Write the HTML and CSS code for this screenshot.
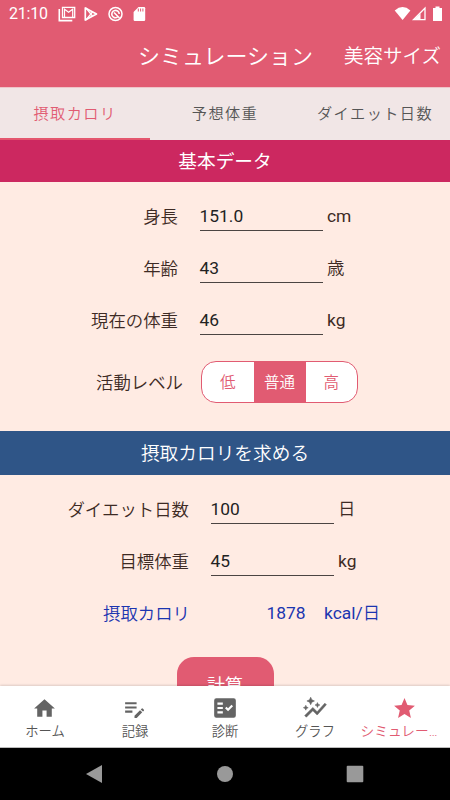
FILE: index.html
```html
<!DOCTYPE html>
<html lang="ja">
<head>
<meta charset="utf-8">
<title>シミュレーション</title>
<link rel="stylesheet" href="styles.css">
</head>
<body>
<div class="screen">
  <div class="status">
    <span class="clock">21:10</span>
    <svg class="notices" width="90" height="18" viewBox="0 0 90 18">
      <g fill="none" stroke="#fff" stroke-width="1.6">
        <path d="M1.300 4v11.600h13"/>
        <path d="M4.500 2.300h12.200v10.200H4.500z" stroke-width="1.300"/>
        <path d="M6.500 12V4.200l4.100 3 4.100-3V12" stroke-width="1.200"/>
        <path d="M27.300 2.900v12.200l11.200-6.100z" stroke-width="1.700" stroke-linejoin="round"/>
        <path d="M28 3l6.500 8M28 15l6.500-8" stroke-width="1.300"/>
        <circle cx="57.500" cy="9" r="6.500" stroke-width="1.500"/>
        <path d="M59.500 12.200A3.700 3.700 0 1 1 61.200 9M56 7.500l5.500 5.500"/>
      </g>
      <path fill="#fff" d="M80.500 2H86q1.200 0 1.200 1.200v11.600Q87.200 16 86 16h-9.200q-1.200 0-1.200-1.200V7z"/>
      <path stroke="#e15b72" stroke-width="1" d="M80.300 3.500v3M82.600 3.500v3M84.900 3.500v3"/>
    </svg>
    <svg class="signals" width="50" height="18" viewBox="0 0 50 18">
      <path fill="#fff" d="M.7 5.500Q8.600-1.400 16.400 5.500L8.600 15z"/>
      <path fill="none" stroke="#fff" stroke-width="1.300" d="M19.500 14.700H31V3z"/>
      <path fill="#fff" d="M26.500 8.500V15H19.500zM41.500 1.500h4v1.600H48v12.400q0 .5-.5.500h-8q-.5 0-.5-.5V3.100h2.500z"/>
    </svg>
  </div>
  <header class="appbar">
    <h1>シミュレーション</h1>
    <span class="action">美容サイズ</span>
  </header>
  <nav class="tabs">
    <span class="tab active">摂取カロリ</span>
    <span class="tab">予想体重</span>
    <span class="tab">ダイエット日数</span>
  </nav>
  <main class="content">
    <h2 class="section basic">基本データ</h2>
    <div class="form">
      <div class="row"><span class="label">身長</span><span class="field">151.0</span><span class="unit latin">cm</span></div>
      <div class="row"><span class="label">年齢</span><span class="field">43</span><span class="unit">歳</span></div>
      <div class="row"><span class="label">現在の体重</span><span class="field">46</span><span class="unit latin">kg</span></div>
      <div class="row level"><span class="label">活動レベル</span>
        <div class="segments"><span>低</span><span class="on">普通</span><span>高</span></div>
      </div>
    </div>
    <h2 class="section goal">摂取カロリを求める</h2>
    <div class="form target">
      <div class="row"><span class="label">ダイエット日数</span><span class="field">100</span><span class="unit">日</span></div>
      <div class="row"><span class="label">目標体重</span><span class="field">45</span><span class="unit latin">kg</span></div>
      <div class="row result"><span class="label">摂取カロリ</span><span class="value">1878</span><span class="unit"><span class="latin">kcal/</span>日</span></div>
    </div>
    <div class="calc">計算</div>
  </main>
  <nav class="bottom">
    <div class="item"><svg viewBox="0 0 24 24"><path d="M10 20v-6h4v6h5v-8h3L12 3 2 12h3v8z"/></svg><span>ホーム</span></div>
    <div class="item"><svg viewBox="0 0 24 24"><path d="M3 10h11v2H3zm0-4h11v2H3zm0 8h7v2H3zm15.010-1.130.71-.71a1 1 0 0 1 1.410 0l.71.710a1 1 0 0 1 0 1.410l-.71.710zm-.71.710-5.300 5.300V21h2.120l5.300-5.300z"/></svg><span>記録</span></div>
    <div class="item"><svg class="wide" viewBox="0 0 24 24"><path fill-rule="evenodd" d="M20 3H4a2 2 0 0 0-2 2v14a2 2 0 0 0 2 2h16a2 2 0 0 0 2-2V5a2 2 0 0 0-2-2zM10 17H5v-2h5zm0-4H5v-2h5zm0-4H5V7h5zm4.820 6L12 12.160l1.410-1.410 1.410 1.420L17.990 9l1.420 1.420z"/></svg><span>診断</span></div>
    <div class="item"><svg class="wide" viewBox="0 0 24 24"><path d="m14.060 9.940-1.560-.69 1.560-.69.690-1.560.690 1.560 1.560.690-1.560.690-.690 1.560zM4 14l.69-1.560 1.560-.690-1.560-.690L4 9.500l-.69 1.560-1.560.690 1.560.690zm4.500-5 1.090-2.410L12 5.500 9.590 4.410 8.500 2 7.410 4.410 5 5.500l2.410 1.090zm-4 11.500 6-6.010 4 4L23 8.930l-1.410-1.410-7.090 7.970-4-4L3 19z" transform="translate(-.5 0)" stroke="#646464" stroke-width=".5"/></svg><span>グラフ</span></div>
    <div class="item current"><svg viewBox="0 0 24 24"><path d="M12 17.270 18.180 21l-1.640-7.030L22 9.240l-7.190-.61L12 2 9.190 8.630 2 9.240l5.460 4.730L5.820 21z"/></svg><span>シミュレー…</span></div>
  </nav>
  <div class="system">
    <svg viewBox="0 0 18 20"><path d="M17 1v18L1 10z"/></svg>
    <svg viewBox="0 0 18 20"><circle cx="9" cy="10" r="8"/></svg>
    <svg viewBox="0 0 18 20"><rect x=".7" y="1.700" width="16.600" height="16.600" rx="1"/></svg>
  </div>
</div>
</body>
</html>
```
FILE: styles.css
```css
* { box-sizing: border-box; }
body {
  margin: 0;
  font-family: Roboto, "Noto Sans CJK JP", sans-serif;
  font-weight: 400;
}
h1, h2 { margin: 0; font-weight: 400; }
.screen {
  width: 450px;
  height: 800px;
  display: flex;
  flex-direction: column;
  overflow: hidden;
  background: #ffebe3;
}
.status {
  height: 27px;
  flex: none;
  display: flex;
  align-items: center;
  padding: 0 6.500px 0 9px;
  background: #e15b72;
  color: #fff;
}
.clock { width: 49px; font-size: 16px; line-height: 27px; letter-spacing: -.2px; }
.signals { margin-left: auto; }
.appbar {
  height: 60px;
  flex: none;
  display: flex;
  align-items: center;
  justify-content: flex-end;
  gap: 31px;
  padding: 0 9px 5px 0;
  background: #e15b72;
  color: #fff;
}
.appbar h1 { font-size: 22px; font-weight: 350; padding-bottom: 2px; }
.action { font-size: 19.5px; font-weight: 350; }
.tabs {
  height: 53px;
  flex: none;
  display: grid;
  grid-template-columns: repeat(3, 1fr);
  background: #f1e6e6;
  border-top: 1px solid #efc5c9;
}
.tab {
  display: flex;
  align-items: center;
  justify-content: center;
  padding-bottom: 3px;
  border-bottom: 2px solid transparent;
  font-size: 15.200px;
  letter-spacing: 1.400px;
  font-weight: 350;
  color: #555;
  white-space: nowrap;
}
.tab.active { color: #e15b72; border-color: #e4566e; }
.content { flex: 1; min-height: 0; overflow: hidden; }
.section {
  display: flex;
  align-items: center;
  justify-content: center;
  padding-bottom: 3px;
  font-size: 18.700px;
  color: #fff;
}
.basic { height: 42px; background: #cc2860; padding-bottom: 4px; }
.goal { height: 44px; background: #2f5587; font-weight: 350; }
.form { height: 249px; padding-top: 8px; }
.row {
  height: 52px;
  display: grid;
  grid-template-columns: 178px 123px 1fr;
  font-size: 17.400px;
  line-height: 53px;
  color: #3d2a24;
  font-weight: 350;
}
.label { text-align: right; white-space: nowrap; line-height: 54px; }
.field {
  height: 41px;
  margin-left: 21.500px;
  margin-right: -21.500px;
  border-bottom: 1px solid #4b4442;
  color: #222;
  font-weight: 400;
}
.unit { padding-left: 26px; }
.latin { font-weight: 400; }
.level { height: 72px; grid-template-columns: 183px auto; }
.level .label { line-height: 74px; }
.segments {
  width: 157px;
  height: 42px;
  margin: 15px 0 0 18px;
  display: grid;
  grid-template-columns: 51.500px 52px 1fr;
  border: 1px solid #e15b72;
  border-radius: 15px;
  overflow: hidden;
  background: #fff;
  font-size: 15.500px;
  line-height: 42px;
  text-align: center;
  color: #e15b72;
}
.segments .on { background: #e15b72; color: #fff; }
.target { height: 182px; padding-top: 8px; }
.target .row { grid-template-columns: 189px 123px 1fr; }
.result, .result .unit { color: #1b35b0; }
.target .result { grid-template-columns: 190px 122px 1fr; }
.result .value { padding-left: 76.500px; font-weight: 400; }
.result .unit { padding-left: 12px; }
.calc {
  width: 97px;
  height: 58px;
  margin: 0 auto;
  border-radius: 17px;
  background: #e15b72;
  color: #fff;
  font-size: 18px;
  line-height: 57px;
  text-align: center;
}
.bottom {
  height: 62px;
  flex: none;
  display: grid;
  grid-template-columns: repeat(5, 90px);
  background: #fff;
  border-bottom: 1px solid #bbb;
  box-shadow: 0 -1px 2px #0002;
}
.item {
  display: flex;
  flex-direction: column;
  align-items: center;
  padding-top: 10px;
  font-size: 13.300px;
  line-height: 22px;
  font-weight: 350;
  color: #555;
  white-space: nowrap;
}
.item svg { width: 25px; height: 25px; flex: none; margin-right: 1px; fill: #646464; }
.item .wide { width: 26px; height: 26px; margin: -1px 0 0; }
.item.current { color: #e15b72; }
.item.current svg { fill: #e15b72; }
.item.current span { margin-right: 12px; font-size: 13.700px; line-height: 21px; }
.system {
  height: 52px;
  flex: none;
  display: flex;
  justify-content: space-between;
  align-items: center;
  padding: 0 86px 0 85px;
  background: #000;
}
.system svg { width: 18px; height: 20px; fill: #999; }
```
